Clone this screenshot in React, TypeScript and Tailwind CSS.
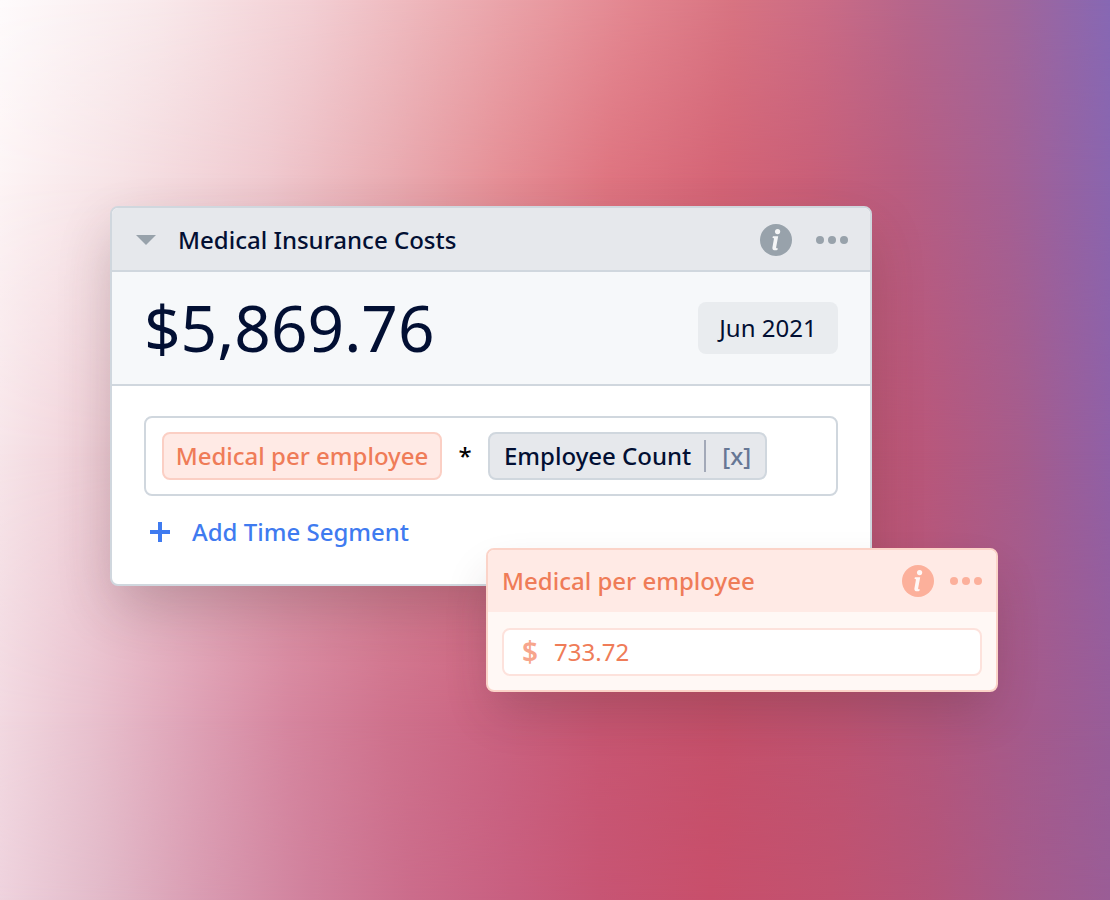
import { useState } from "react";

// Backdrop colours, one horizontal gradient per row. Each row fades in over the one above it.
const BACKDROP_ROWS = [
  "bg-[linear-gradient(90deg,#fefbfc_0%,#f9eaec_14%,#f3cfd4_28%,#edb1b6_40%,#e8989f_50%,#e38690_57%,#d87482_66%,#cb6c86_74%,#b6668c_82%,#a2669a_91%,#8768b4_100%)]",
  "bg-[linear-gradient(90deg,#fdf4f5_0%,#f6e2e5_11%,#efc9cf_24%,#e9acb2_35%,#e58f96_45%,#de7480_55%,#d46476_65%,#c95f78_73%,#b95d80_81%,#a46094_91%,#8a65ae_100%)] [mask-image:linear-gradient(180deg,transparent_0%,black_20%)]",
  "bg-[linear-gradient(90deg,#f7e5e9_0%,#f0d0d8_8%,#e5adb9_20%,#d9808f_40%,#d26379_60%,#c55670_74%,#b9577a_83%,#a65c8c_92%,#9060a6_100%)] [mask-image:linear-gradient(180deg,transparent_20%,black_50%)]",
  "bg-[linear-gradient(90deg,#f2d9e1_0%,#e9c2cf_8%,#dfa3b7_17%,#d6869f_26%,#cf728d_35%,#ca6280_45%,#c85672_54%,#c5506a_65%,#bd5372_76%,#b2567c_84%,#a55a8b_92%,#985d99_100%)] [mask-image:linear-gradient(180deg,transparent_50%,black_80%)]",
  "bg-[linear-gradient(90deg,#eed2dd_0%,#e2bac9_9%,#d99cb2_18%,#d0809c_28%,#cb6c8b_37%,#c85f80_46%,#c75574_54%,#c84f6b_64%,#c15270_75%,#b5557a_84%,#a65a8a_92%,#9a5d96_100%)] [mask-image:linear-gradient(180deg,transparent_80%,black_100%)]",
];

function InfoIcon() {
  return (
    <svg viewBox="0 0 32 32" className="size-8" aria-hidden="true">
      <circle cx="16" cy="16" r="16" fill="currentColor" />
      <circle cx="17.6" cy="7.6" r="2.6" fill="white" fillOpacity="0.9" />
      <path
        d="M12.9 12.2h5.3l-2.1 11.2c-.1.6.2.9.8.8h.9l-.4 1.8c-3 .8-5.4.1-5-2.5l1.5-8.6c.1-.5-.1-.8-.6-.8h-.8z"
        fill="white"
        fillOpacity="0.9"
      />
    </svg>
  );
}

function DotsIcon() {
  return (
    <svg viewBox="0 0 32 8" className="h-2 w-8" fill="currentColor" aria-hidden="true">
      <circle cx="4" cy="4" r="4" />
      <circle cx="16" cy="4" r="4" />
      <circle cx="28" cy="4" r="4" />
    </svg>
  );
}

export default function App() {
  const [open, setOpen] = useState(true);
  const [amount, setAmount] = useState("733.72");

  return (
    <main className="relative isolate min-h-screen pt-[206px] pr-28 pb-28 pl-[110px] font-['Noto_Sans',sans-serif] text-2xl text-[#020f33]">
      {/* Backdrop */}
      <div className="absolute inset-0 -z-10">
        {BACKDROP_ROWS.map((row) => (
          <div key={row} className={`absolute inset-0 ${row}`} />
        ))}
      </div>

      {/* Driver card */}
      <section className="mr-[126px] overflow-hidden rounded-lg border-2 border-[#d0d7de] bg-white shadow-[0_24px_56px_-4px_rgba(60,40,45,0.24)]">
        <header className="flex h-16 items-center border-b-2 border-[#d0d7de] bg-[#e6e8ec] pt-[2px] pr-[22px] pl-6 text-[#98a2ab]">
          <button type="button" aria-label="Toggle details" aria-expanded={open} onClick={() => setOpen(!open)}>
            <svg viewBox="0 0 20 10" className="h-[10px] w-5" fill="currentColor" aria-hidden="true">
              <path d="M0 0h20L10 10z" />
            </svg>
          </button>
          <h1 className="ml-[22px] flex-1 font-medium text-[#020f33]">Medical Insurance Costs</h1>
          <button type="button" aria-label="About this cost">
            <InfoIcon />
          </button>
          <button type="button" aria-label="More options" className="ml-6">
            <DotsIcon />
          </button>
        </header>

        <div className="flex h-[114px] items-center justify-between border-b-2 border-[#d0d7de] bg-[#f6f8fa] px-8">
          <p className="text-[64px] leading-none">$5,869.76</p>
          <button type="button" className="h-[52px] w-[140px] rounded-lg bg-[#e9ecef]">
            Jun 2021
          </button>
        </div>

        {open && (
          <div className="px-8 pt-[30px] pb-9">
            <div className="flex h-20 items-center rounded-lg border-2 border-[#d0d7de] px-4 font-medium">
              <button type="button" className="h-12 w-[280px] rounded-lg border-2 border-[#fbcfc4] bg-[#ffeae5] text-[#ef7c58]">
                Medical per employee
              </button>
              <span className="w-[46px] text-center text-black">*</span>
              <button type="button" className="flex h-12 items-center rounded-lg border-2 border-[#d0d7de] bg-[#e6e8ec] px-[14px]">
                Employee Count
                <span className="ml-[13px] h-8 border-l-2 border-[#a3a9b8] pl-4 leading-8 text-[#667795]">[x]</span>
              </button>
            </div>
            <button type="button" className="mt-5 flex items-center gap-[22px] pl-[6px] font-medium text-[#3f7bf0]">
              <svg viewBox="0 0 20 20" className="size-5" fill="currentColor" aria-hidden="true">
                <path d="M8 0h4v8h8v4h-8v8H8v-8H0V8h8z" />
              </svg>
              Add Time Segment
            </button>
          </div>
        )}
      </section>

      {/* Variable card, overlaps the corner of the driver card */}
      <section className="relative -mt-[38px] ml-auto w-[512px] overflow-hidden rounded-lg border-2 border-[#fbd3c8] bg-[#fff8f5] text-[#ef7c58] shadow-[0_24px_48px_-8px_rgba(60,40,45,0.24)]">
        <header className="flex h-[62px] items-center bg-[#ffeae5] px-[14px]">
          <h2 className="flex-1 font-medium">Medical per employee</h2>
          <button type="button" aria-label="About this variable" className="text-[#fcb09b]">
            <InfoIcon />
          </button>
          <button type="button" aria-label="More options" className="ml-4 text-[#fcb09b]">
            <DotsIcon />
          </button>
        </header>
        <div className="px-[14px] pt-4 pb-[14px]">
          <label className="flex h-12 items-center gap-4 rounded-lg border-2 border-[#fde2dc] bg-white px-[18px]">
            <span className="text-[28px] font-semibold text-[#f7a58c]">$</span>
            <input
              type="text"
              inputMode="decimal"
              aria-label="Medical per employee"
              value={amount}
              onChange={(e) => setAmount(e.target.value)}
              className="min-w-0 flex-1 bg-transparent outline-none"
            />
          </label>
        </div>
      </section>
    </main>
  );
}
